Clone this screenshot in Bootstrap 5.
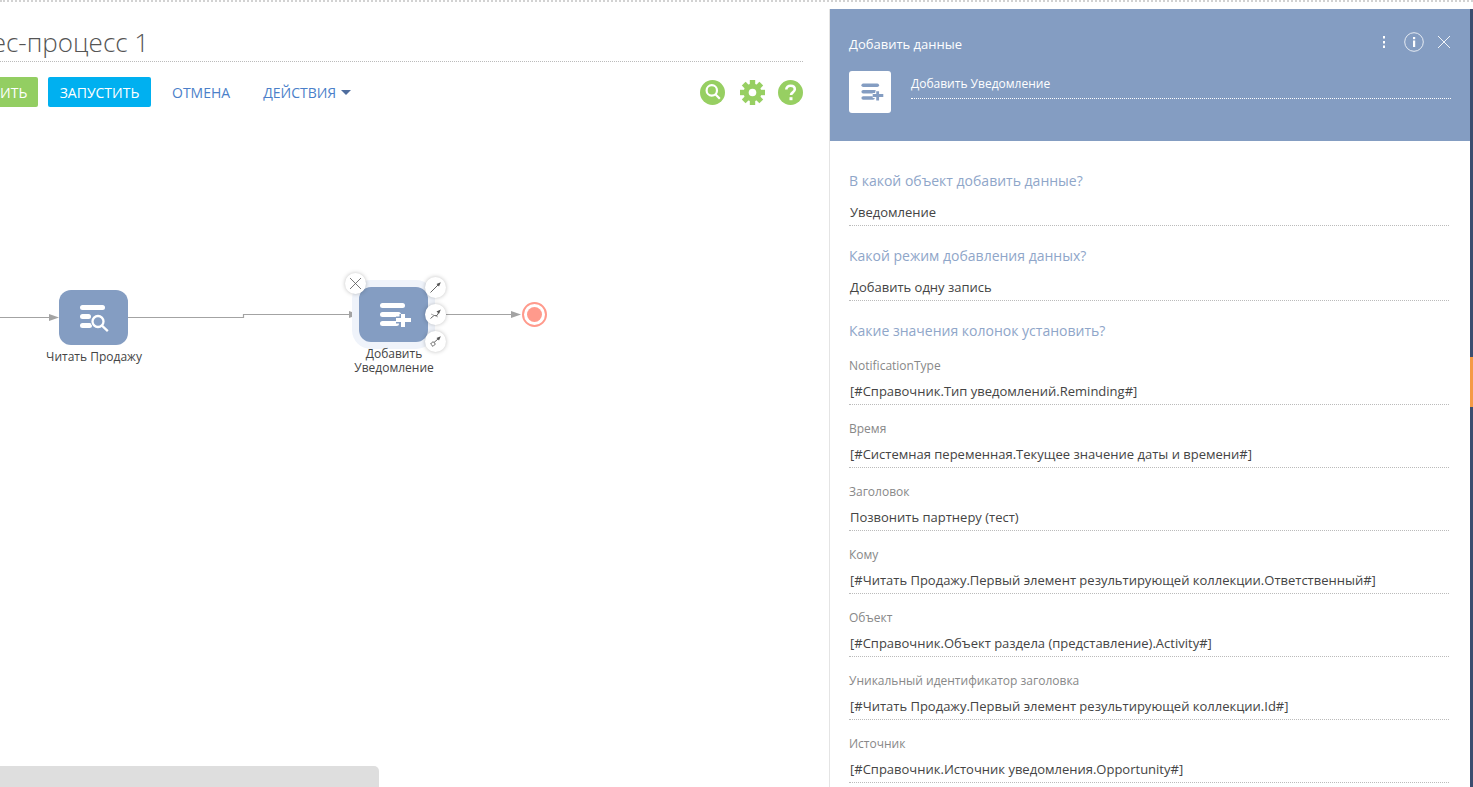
<!DOCTYPE html>
<html lang="ru">
<head>
  <meta charset="UTF-8" />
  <meta name="viewport" content="width=device-width, initial-scale=1.0"/>
  <title>Бизнес-процесс 1</title>
  <link href="https://cdn.jsdelivr.net/npm/bootstrap@5.3.3/dist/css/bootstrap.min.css" rel="stylesheet">
  <style>
    html, body { height: 100%; overflow: hidden; }
    body { font-family: "Open Sans", "Liberation Sans", sans-serif; color: #444; background: #fff; }
    .top-edge { height: 9px; flex: none; border-top: 2px dotted #d2d2d2; }
    .work-area { height: 778px; }
    .left-side { width: 829px; flex: none; overflow: hidden; }
    .title-wrap { margin: 0 26px 0 -67px; height: 53px; border-bottom: 1px dotted #bbb; }
    .page-title { font-size: 26px; font-weight: 300; line-height: 36px; color: #555; padding-top: 15px; margin: 0; white-space: nowrap; }
    .tool-row { height: 30px; margin-top: 15px; margin-right: 26px; }
    .tool-btn { height: 30px; border: 0; border-radius: 2px; color: #fff; font-size: 14px; line-height: 30px; padding: 1px 0 0; text-align: center; flex: none; }
    .tool-save { width: 104px; margin-left: -66px; background: #93ce62; }
    .tool-run { width: 103px; margin-left: 10px; background: #00b0f0; }
    .tool-link { color: #4b7fc9; font-size: 14px; text-decoration: none; line-height: 30px; padding-top: 1px; }
    .link-cancel { margin-left: 21px; }
    .link-actions { margin-left: 33px; }
    .tool-caret { display: inline-block; width: 0; height: 0; border: 5px solid transparent; border-top-color: #4f6d9e; border-bottom: 0; margin-left: 5px; vertical-align: 3px; }
    .tool-icons { gap: 14px; margin-left: auto; }
    .gear-icon { margin: 0 -1px 0 1px; }
    .canvas-area { position: relative; flex: 1; }
    .flow-lines { position: absolute; left: 0; top: -107px; }
    .flow-node { position: absolute; background: #849dc2; border-radius: 12px; display: flex; align-items: center; justify-content: center; }
    .node-read { left: 59px; top: 183px; width: 69px; height: 55px; }
    .node-add { left: 359px; top: 180px; width: 69px; height: 55px; box-shadow: 0 0 0 7px #eff3fa; padding-left: 3px; }
    .node-name { position: absolute; font-size: 12px; line-height: 14px; color: #444; text-align: center; }
    .name-read { left: 34px; top: 243px; width: 120px; }
    .name-add { left: 334px; top: 240px; width: 120px; }
    .round-tool { position: absolute; width: 21px; height: 21px; border-radius: 50%; background: #fff; box-shadow: 0 0 4px rgba(0,0,0,.25); display: flex; align-items: center; justify-content: center; }
    .tool-close { left: 345px; top: 166px; }
    .tool-a { left: 425px; top: 170px; }
    .tool-b { left: 425px; top: 197px; }
    .tool-c { left: 425px; top: 224px; }
    .end-event { position: absolute; left: 522px; top: 195px; width: 25px; height: 25px; border-radius: 50%; border: 2px solid #ff9a8c; background: #fff; display: flex; align-items: center; justify-content: center; }
    .end-event span { display: block; width: 15px; height: 15px; border-radius: 50%; background: #ff9a8c; }
    .grey-bar { position: absolute; left: 0; top: 659px; width: 379px; height: 30px; background: #dedede; border-top-right-radius: 5px; }

    .side-panel { width: 641px; flex: none; border-left: 1px solid #e4e4e4; overflow: hidden; }
    .panel-head { height: 132px; background: #849dc2; color: #fff; padding: 27px 19px 0 19px; position: relative; }
    .panel-title { font-size: 13px; line-height: 17px; }
    .panel-actions { position: absolute; right: 20px; top: 23px; }
    .act-info { margin: 0 14px 0 19px; }
    .head-row { margin-top: 18px; }
    .head-icon { width: 42px; height: 42px; background: #fff; border-radius: 3px; flex: none; padding-left: 3px; }
    .head-name { margin-left: 20px; flex: 1; height: 28px; border-bottom: 1px dotted #fff; font-size: 12px; line-height: 26px; }
    .panel-body { padding: 29px 21px 0 19px; }
    .q-block { height: 75px; }
    .q-title { font-size: 14px; line-height: 22px; color: #8fa6c9; }
    .val-line { font-size: 13px; line-height: 18px; color: #444; padding: 0 0 4px 1px; margin-top: 11px; border-bottom: 1px dotted #bbb; height: 23px; white-space: nowrap; }
    .f-block { height: 63px; padding-top: 16px; }
    .f-label { font-size: 12px; line-height: 16px; color: #888; }
    .f-block .val-line { margin-top: 8px; }
    .edge-strip { width: 3px; flex: none; background: #3b4d6f; position: relative; }
    .edge-strip span { position: absolute; left: 0; top: 348px; width: 3px; height: 50px; background: #f59a45; }
  </style>
</head>
<body class="d-flex flex-column">
  <div class="top-edge"></div>
  <div class="work-area d-flex">
    <div class="left-side d-flex flex-column">
      <div class="title-wrap"><h1 class="page-title">Бизнес-процесс 1</h1></div>
      <div class="tool-row d-flex align-items-center">
        <button class="tool-btn tool-save">СОХРАНИТЬ</button>
        <button class="tool-btn tool-run">ЗАПУСТИТЬ</button>
        <a class="tool-link link-cancel" href="#">ОТМЕНА</a>
        <a class="tool-link link-actions" href="#">ДЕЙСТВИЯ<span class="tool-caret"></span></a>
        <div class="tool-icons d-flex align-items-center">
          <svg width="25" height="25" viewBox="0 0 25 25"><circle cx="12.500" cy="12.500" r="12.500" fill="#97cf62"/><circle cx="11.800" cy="10.400" r="5.200" fill="none" stroke="#fff" stroke-width="2.200"/><path d="M15.600 14.400l4.200 4.400" stroke="#fff" stroke-width="2.200"/></svg>
          <svg class="gear-icon" width="25" height="25" viewBox="-12.500 -12.500 25 25"><g stroke="#97cf62" stroke-width="5.400"><path d="M0-12.500V12.500"/><path d="M-12.500 0H12.500"/><path d="M-8.800-8.800L8.800 8.800"/><path d="M8.800-8.800L-8.800 8.800"/></g><circle r="9" fill="#97cf62"/><circle r="3.800" fill="#fff"/></svg>
          <svg width="25" height="25" viewBox="0 0 25 25"><circle cx="12.500" cy="12.500" r="12.500" fill="#97cf62"/><path d="M8.300 9.600c0-2.300 1.900-3.800 4.300-3.800s4.200 1.400 4.200 3.500c0 3.100-3.800 3-3.800 5.800" fill="none" stroke="#fff" stroke-width="2.600"/><rect x="11.500" y="17.200" width="3" height="3" fill="#fff"/></svg>
        </div>
      </div>
      <div class="canvas-area">
        <svg class="flow-lines" width="829" height="400">
          <g fill="none" stroke="#a3a3a3" stroke-width="1.200"><path d="M0 317.500H50"/><path d="M128 317.500H243.500V314.500H350"/><path d="M446 314.500H512"/></g>
          <g fill="#a3a3a3"><path d="M49 314l10 3.500-10 3.500z"/><path d="M349 311l10 3.500-10 3.500z"/><path d="M511 311l10 3.500-10 3.500z"/></g>
        </svg>
        <div class="flow-node node-read">
          <svg width="32" height="30" viewBox="0 0 32 30"><g fill="#fff"><rect x="2" y="2" width="25" height="5" rx="2.500"/><rect x="2" y="11" width="11" height="5" rx="2.500"/><rect x="2" y="20" width="12" height="5" rx="2.500"/></g><circle cx="20" cy="18.500" r="7.500" fill="#849dc2"/><circle cx="20" cy="18.500" r="5.500" fill="none" stroke="#fff" stroke-width="2.300"/><path d="M24.200 22.800l5.600 5.400" stroke="#fff" stroke-width="2.300"/></svg>
        </div>
        <div class="flow-node node-add">
          <svg width="34" height="28" viewBox="0 0 34 28"><g fill="#fff"><rect x="2" y="2" width="25" height="5" rx="2.500"/><rect x="2" y="11" width="21" height="5" rx="2.500"/><rect x="2" y="20" width="19" height="5" rx="2.500"/></g><path d="M18 19h15M25 13v13" stroke="#849dc2" stroke-width="7"/><path d="M18 19h15M25 13v13" stroke="#fff" stroke-width="4"/></svg>
        </div>
        <div class="node-name name-read">Читать Продажу</div>
        <div class="node-name name-add">Добавить<br>Уведомление</div>
        <div class="round-tool tool-close"><svg width="11" height="11" viewBox="0 0 11 11"><path d="M0 0l11 11M11 0L0 11" stroke="#555" stroke-width=".8"/></svg></div>
        <div class="round-tool tool-a"><svg width="11" height="11" viewBox="0 0 11 11"><path d="M.5 10.500L8 3" stroke="#666"/><path d="M6.500 2L10.800.2 9 4.500z" fill="#555"/></svg></div>
        <div class="round-tool tool-b"><svg width="11" height="11" viewBox="0 0 11 11"><path d="M.5 9.500L4 6.500h3L9 3" fill="none" stroke="#666"/><path d="M6.500 2.500L10.800.5 9 4.800z" fill="#555"/><path d="M1 5l7 3" stroke="#888" stroke-width=".7"/></svg></div>
        <div class="round-tool tool-c"><svg width="11" height="11" viewBox="0 0 11 11"><path d="M4 6.500L8 3" stroke="#666"/><path d="M6.500 2L10.800.2 9 4.500z" fill="#555"/><path d="M.6 8L3 5.600 5.400 8 3 10.400z" fill="none" stroke="#666"/></svg></div>
        <div class="end-event"><span></span></div>
        <div class="grey-bar"></div>
      </div>
    </div>
    <div class="side-panel">
      <div class="panel-head">
        <div class="panel-actions d-flex align-items-center">
          <svg width="2" height="12" viewBox="0 0 2 12"><g fill="#fff"><rect x="0" y="0" width="2" height="2.500"/><rect x="0" y="5" width="2" height="2.500"/><rect x="0" y="9.500" width="2" height="2.500"/></g></svg>
          <svg class="act-info" width="20" height="20" viewBox="0 0 20 20"><circle cx="10" cy="10" r="9.300" fill="none" stroke="#fff" stroke-width="1" opacity=".8"/><rect x="9" y="8.500" width="2.200" height="6.500" fill="#fff"/><rect x="9" y="5" width="2.200" height="2.200" fill="#fff"/></svg>
          <svg width="12" height="12" viewBox="0 0 12 12"><path d="M0 0l12 12M12 0L0 12" stroke="#fff" stroke-width=".9"/></svg>
        </div>
        <div class="panel-title">Добавить данные</div>
        <div class="head-row d-flex">
          <div class="head-icon d-flex align-items-center justify-content-center">
            <svg width="24" height="20" viewBox="0 0 34 28"><g fill="#849dc2"><rect x="2" y="2" width="25" height="5" rx="2.500"/><rect x="2" y="11" width="21" height="5" rx="2.500"/><rect x="2" y="20" width="19" height="5" rx="2.500"/></g><path d="M18 19h15M25 13v13" stroke="#fff" stroke-width="7"/><path d="M18 19h15M25 13v13" stroke="#849dc2" stroke-width="4"/></svg>
          </div>
          <div class="head-name">Добавить Уведомление</div>
        </div>
      </div>
      <div class="panel-body">
        <div class="q-block"><div class="q-title">В какой объект добавить данные?</div><div class="val-line">Уведомление</div></div>
        <div class="q-block"><div class="q-title">Какой режим добавления данных?</div><div class="val-line">Добавить одну запись</div></div>
        <div class="q-title">Какие значения колонок установить?</div>
        <div id="fieldList"></div>
      </div>
    </div>
    <div class="edge-strip"><span></span></div>
  </div>

  <script>
    const fields = [
      ['NotificationType', '[#Справочник.Тип уведомлений.Reminding#]'],
      ['Время', '[#Системная переменная.Текущее значение даты и времени#]'],
      ['Заголовок', 'Позвонить партнеру (тест)'],
      ['Кому', '[#Читать Продажу.Первый элемент результирующей коллекции.Ответственный#]'],
      ['Объект', '[#Справочник.Объект раздела (представление).Activity#]'],
      ['Уникальный идентификатор заголовка', '[#Читать Продажу.Первый элемент результирующей коллекции.Id#]'],
      ['Источник', '[#Справочник.Источник уведомления.Opportunity#]']
    ];
    document.getElementById('fieldList').innerHTML = fields.map(f =>
      `<div class="f-block"><div class="f-label">${f[0]}</div><div class="val-line">${f[1]}</div></div>`
    ).join('');
  </script>
  <script src="https://cdn.jsdelivr.net/npm/bootstrap@5.3.3/dist/js/bootstrap.bundle.min.js"></script>
</body>
</html>
